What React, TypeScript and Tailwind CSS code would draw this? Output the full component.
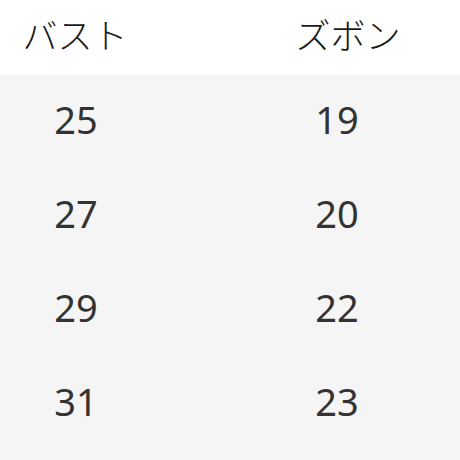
const rows = [
  ["25", "19"],
  ["27", "20"],
  ["29", "22"],
  ["31", "23"],
];

export default function App() {
  return (
    <div className="w-[460px] h-[460px] bg-[#f5f5f5] overflow-hidden">
      <div className="flex h-[75px] items-center pb-[6px] bg-white text-[35px] font-light text-[#1a1a1a] font-['Noto_Sans_CJK_JP',sans-serif]">
        <div className="w-[150px] text-center">バスト</div>
        <div className="ml-[118px] w-[160px] text-center">ズボン</div>
      </div>
      {rows.map(([bust, pants]) => (
        <div
          key={bust}
          className="flex h-[94px] items-center pb-[6px] text-[38px] text-[#333333] font-['Noto_Sans',sans-serif]"
        >
          <div className="w-[152px] text-center">{bust}</div>
          <div className="ml-[105px] w-[160px] text-center">{pants}</div>
        </div>
      ))}
    </div>
  );
}
